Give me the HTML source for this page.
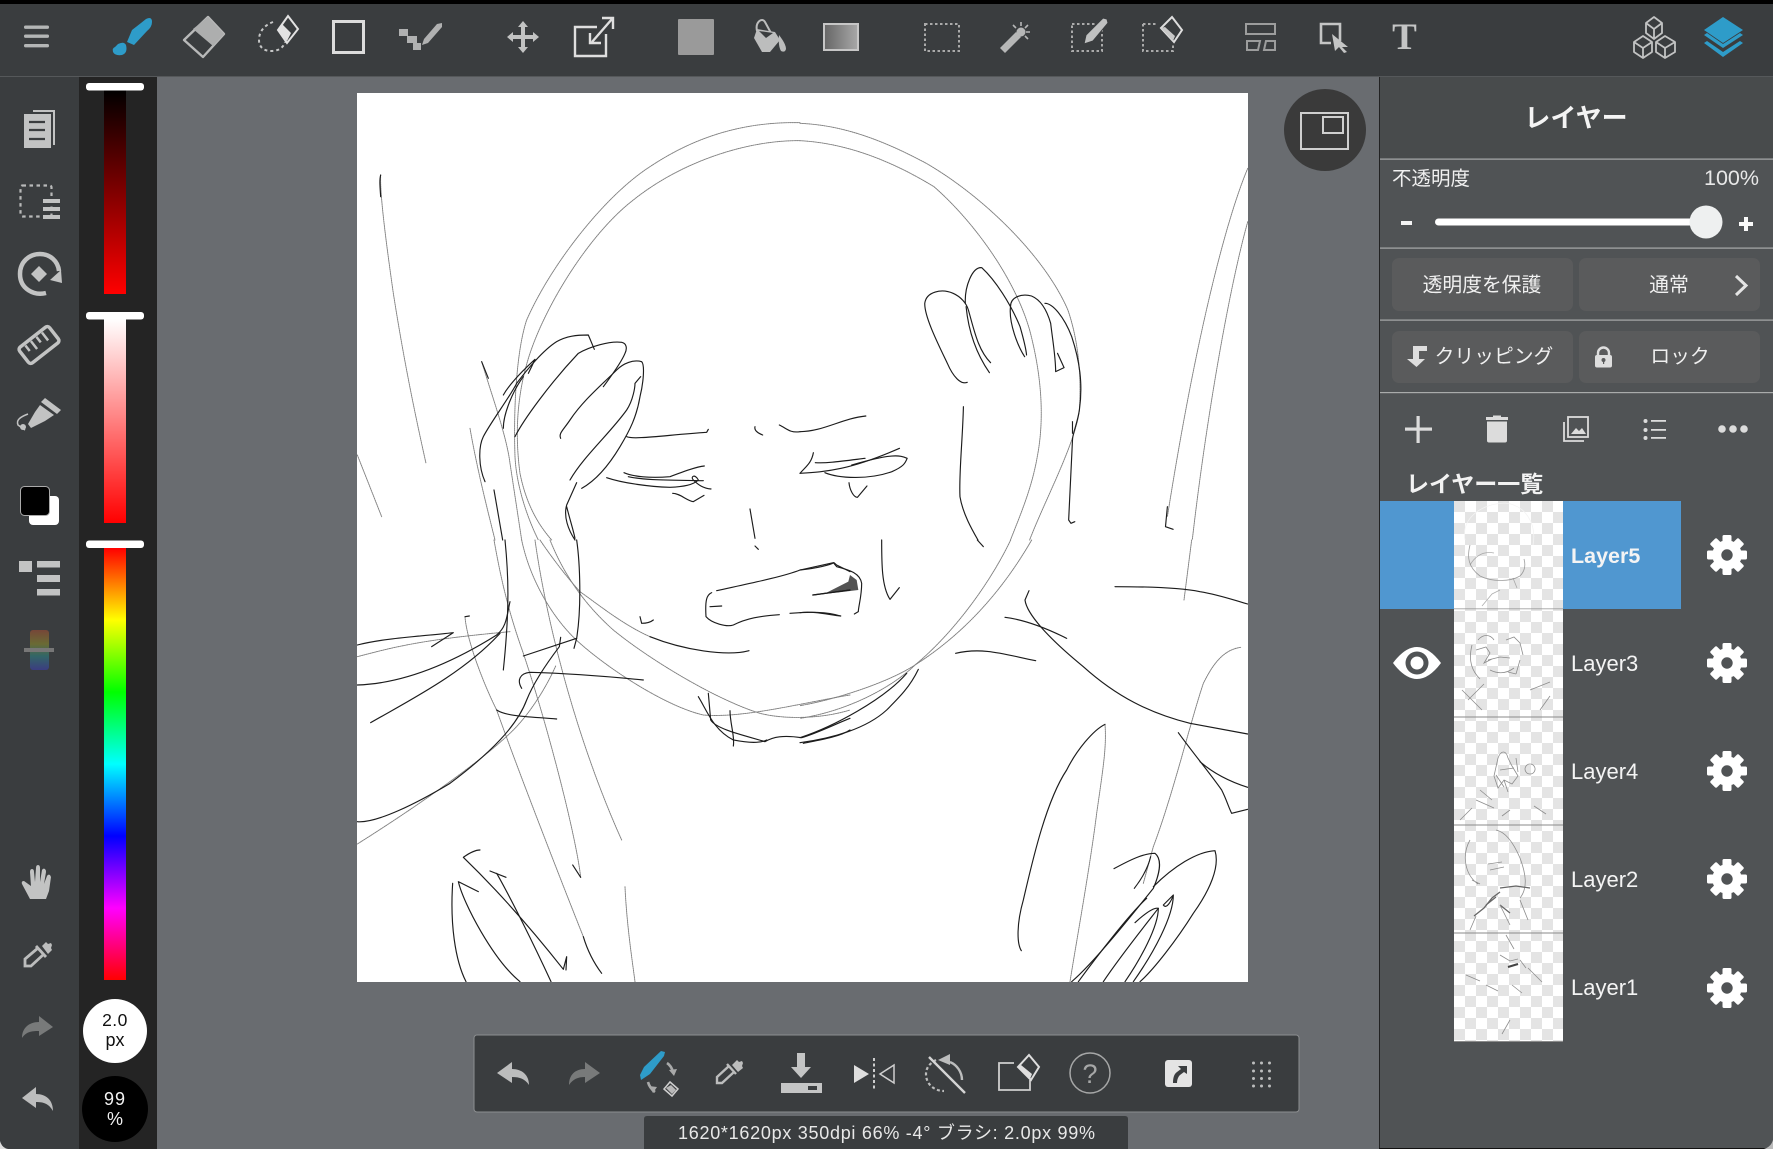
<!DOCTYPE html>
<html lang="ja"><head><meta charset="utf-8"><title>レイヤー</title>
<style>
html,body{margin:0;padding:0;background:#696c70;width:1773px;height:1149px;overflow:hidden}
svg{display:block}
text{font-family:"Liberation Sans","Noto Sans CJK JP",sans-serif}
.k path{fill:none;vector-effect:non-scaling-stroke;stroke-linecap:round;stroke-linejoin:round}
.d path{stroke:#1c1c1c;stroke-width:1.15}
.g path{stroke:#808080;stroke-width:.95;stroke-dasharray:1.3 .9}
.t path{fill:none;stroke:#8d8d8d;stroke-width:.8}
</style></head><body>
<svg xmlns="http://www.w3.org/2000/svg" width="1773" height="1149" viewBox="0 0 1773 1149">
<defs>
<linearGradient id="s1" x1="0" y1="0" x2="0" y2="1"><stop offset="0" stop-color="#000"/><stop offset="1" stop-color="#f00"/></linearGradient>
<linearGradient id="s2" x1="0" y1="0" x2="0" y2="1"><stop offset="0" stop-color="#fff"/><stop offset="1" stop-color="#f00"/></linearGradient>
<linearGradient id="s3" x1="0" y1="0" x2="0" y2="1"><stop offset="0" stop-color="#f00"/><stop offset=".1667" stop-color="#ff0"/><stop offset=".3333" stop-color="#0f0"/><stop offset=".5" stop-color="#0ff"/><stop offset=".6667" stop-color="#00f"/><stop offset=".8333" stop-color="#f0f"/><stop offset="1" stop-color="#f00"/></linearGradient>
<linearGradient id="gr" x1="0" y1="0" x2="1" y2="0"><stop offset="0" stop-color="#666"/><stop offset="1" stop-color="#a8a8a8"/></linearGradient>
<linearGradient id="rb" x1="0" y1="0" x2="0" y2="1"><stop offset="0" stop-color="#8a4a36"/><stop offset=".35" stop-color="#7a7a30"/><stop offset=".65" stop-color="#2f7474"/><stop offset="1" stop-color="#3c3c96"/></linearGradient>
<pattern id="chk" width="22" height="22" patternUnits="userSpaceOnUse" x="1454" y="501"><rect width="22" height="22" fill="#fff"/><rect width="11" height="11" fill="#e4e4e4"/><rect x="11" y="11" width="11" height="11" fill="#e4e4e4"/></pattern>
<g id="gear"><circle r="10.2" fill="none" stroke="#fff" stroke-width="9"/><g fill="#fff"><rect x="-4.5" y="-20" width="9" height="8" rx="1.5"/><rect x="-4.5" y="-20" width="9" height="8" rx="1.5" transform="rotate(45)"/><rect x="-4.5" y="-20" width="9" height="8" rx="1.5" transform="rotate(90)"/><rect x="-4.5" y="-20" width="9" height="8" rx="1.5" transform="rotate(135)"/><rect x="-4.5" y="-20" width="9" height="8" rx="1.5" transform="rotate(180)"/><rect x="-4.5" y="-20" width="9" height="8" rx="1.5" transform="rotate(225)"/><rect x="-4.5" y="-20" width="9" height="8" rx="1.5" transform="rotate(270)"/><rect x="-4.5" y="-20" width="9" height="8" rx="1.5" transform="rotate(315)"/></g></g>
<clipPath id="cv"><rect x="357" y="93" width="891" height="889"/></clipPath>
<clipPath id="th"><rect x="1454" y="501" width="109" height="541"/></clipPath>
</defs>

<rect width="1773" height="1149" fill="#696c70"/>
<!-- top bar -->
<rect width="1773" height="77" fill="#3a3d3f"/>
<rect width="1773" height="4" fill="#000"/>
<rect y="76" width="1773" height="1" fill="#55585a"/>
<!-- left rail -->
<rect y="77" width="79" height="1072" fill="#3a3d3f"/>
<rect x="79" y="77" width="78" height="1072" fill="#242424"/>
<path d="M0 1141v8h8q-6-1-8-8z" fill="#ddd"/>

<!-- top icons -->
<g fill="#b4b6b6"><rect x="24" y="25.5" width="25" height="3.4" rx="1.5"/><rect x="24" y="34.5" width="25" height="3.4" rx="1.5"/><rect x="24" y="44" width="25" height="3.4" rx="1.5"/></g>
<g fill="#2e9cc9"><path d="M146 19q6-3 6 3q0 5-5 9L134 45l-7-3 5-12 9-7z"/><path d="M118 44q6-3 8 1q2 8-4 10q-7 1-9-3q-1-4 2-5z"/></g>
<path d="M208 17l16 17-21 23-19-17z" fill="none" stroke="#b8b9b9" stroke-width="2.4" stroke-linejoin="round"/>
<path d="M208 17l16 17-11 12-20-17z" fill="#adaeae"/>
<g fill="none" stroke="#c6c7c7"><path d="M273 22c-8 3-14 9-14 18 0 8 6 11 12 11 6 0 12-2 14-9" stroke-width="2" stroke-dasharray="3 3"/></g>
<path d="M288 16l10 13-11 14-9-13z" fill="#3a3d3f" stroke="#e2e2e2" stroke-width="2"/><path d="M282 24l9 9-4 8-9-11z" fill="#e2e2e2"/>
<rect x="333.500" y="21.500" width="30" height="31" fill="none" stroke="#dcdcdc" stroke-width="3"/>
<g fill="#b0b1b1"><rect x="399" y="29" width="9" height="7"/><rect x="407" y="36" width="10" height="7"/><rect x="413" y="43" width="8" height="7"/><path d="M437 24l5-1 0 4-14 16-6 2 2-6z"/></g>
<g fill="#c2c3c3"><path d="M523 21l5 6h-3v8h8v-3l6 5-6 5v-3h-8v8h3l-5 6-5-6h3v-8h-8v3l-6-5 6-5v3h8v-8h-3z"/></g>
<g fill="none" stroke="#dfdfdf" stroke-width="2.4"><path d="M606 34v22h-31V27h22"/><path d="M592 42l20-23M602 18h11v11M590 33v10h11"/></g>
<rect x="678" y="19" width="36" height="36" rx="1" fill="#9a9a9a"/>
<path d="M757 31C755 22 762 17 765 22L771 33" fill="none" stroke="#bcbdbd" stroke-width="2"/>
<path d="M757 29L775 32L780 40L770 52H762L754 38Z" fill="#bcbdbd"/>
<path d="M759 31L773 33L766 38Z" fill="#3a3d3f"/>
<path d="M779 35Q786 44 786 49Q785 53 781 51Q778 46 779 35Z" fill="#bcbdbd"/>
<rect x="824" y="24" width="34" height="26" fill="url(#gr)" stroke="#c6c6c6" stroke-width="2"/>

<rect x="925" y="24" width="34" height="27" fill="none" stroke="#aaa" stroke-width="2" stroke-dasharray="2.5 2.5"/>
<g fill="#b6b7b7"><path d="M1016 32l5 5-16 16-5-5z"/><circle cx="1021" cy="32" r="4.5"/></g><g stroke="#b6b7b7" stroke-width="1.6"><path d="M1021 22v4M1030 32h-4M1028 25l-3 3M1028 39l-3-3M1013 25l3 3"/></g>
<rect x="1072" y="24" width="30" height="27" fill="none" stroke="#aaa" stroke-width="2" stroke-dasharray="2.5 2.5"/>
<path d="M1103 18l4 1 1 4-15 18-9 3 2-9z" fill="#c0c1c1" stroke="#3a3d3f" stroke-width="1"/>
<path d="M1143 24h14M1143 24v27h30v-8" fill="none" stroke="#aaa" stroke-width="2" stroke-dasharray="2.5 2.5"/>
<path d="M1172 17l10 13-8 12-13-14z" fill="#3a3d3f" stroke="#dedede" stroke-width="2"/><path d="M1165 27l10 9-2 5-12-13z" fill="#c8c8c8"/>

<g fill="none" stroke="#9c9d9d" stroke-width="2"><rect x="1246" y="24" width="29" height="10"/><path d="M1247 41h13l-2 9h-11zM1266 41h9v9h-11z"/></g>
<path d="M1340 41V24h-19v19h10" fill="none" stroke="#c4c5c5" stroke-width="2.6"/>
<path d="M1332 34l16 13-6 0 5 5-3 1-5-6-4 4z" fill="#c4c5c5"/>
<text x="1404.500" y="49" text-anchor="middle" style="font-family:'Liberation Serif',serif" font-size="37" font-weight="bold" fill="#c4c5c5">T</text>

<g fill="none" stroke="#c2c3c3" stroke-width="1.8" stroke-linejoin="round">
<path d="M1654 17l8 6v10l-8 6-8-6V23zM1646 23l8 6 8-6M1654 29v10"/>
<path d="M1643 36l9 6v10l-9 6-9-6V42zM1634 42l9 6 9-6M1643 48v10"/>
<path d="M1665 36l10 6v10l-10 6-9-6V42zM1656 42l9 6 10-6M1665 48v10"/>
</g>
<g fill="#2e9cc9"><path d="M1723 17l20 13-20 13-19-13z"/><path d="M1704 35l3-2 16 11 17-11 3 2-20 13zM1704 43l3-2 16 11 17-11 3 2-20 14z"/></g>

<!-- left icons -->
<g fill="none" stroke="#c2c3c3"><path d="M33 111h21v34" stroke-width="2"/></g>
<rect x="24" y="114" width="27" height="34" fill="#c2c3c3"/>
<g stroke="#3a3d3f" stroke-width="2.2"><path d="M29 122h16M29 130h16M29 139h16"/></g>
<rect x="20.500" y="185.500" width="31" height="31" rx="2" fill="none" stroke="#b8b9b9" stroke-width="2.2" stroke-dasharray="3.500 3.500"/>
<g fill="#c2c3c3"><rect x="43" y="199" width="17" height="4"/><rect x="43" y="207" width="17" height="4"/><rect x="43" y="215" width="17" height="4"/></g>
<path d="M46 293c-12 3-26-4-26-19 0-12 9-20 20-20 10 0 18 7 19 17" fill="none" stroke="#c2c3c3" stroke-width="4.500"/>
<path d="M50 280l11-10 1 13z" fill="#c2c3c3"/><path d="M39 266l8 8-8 8-8-8z" fill="#c2c3c3"/>
<g transform="translate(39 345) rotate(-38)"><rect x="-19" y="-10" width="38" height="20" rx="3" fill="none" stroke="#c2c3c3" stroke-width="3.500"/><g stroke="#c2c3c3" stroke-width="2.500"><path d="M-11-8v7M-4-8v10M3-8v7M10-8v10"/></g></g>
<path d="M45 398l16 12-4 4-16-12z" fill="#c2c3c3"/><path d="M40 405l14 10-9 6-14 7-3-4 7-12z" fill="#c2c3c3"/>
<path d="M28 414c-8 3-12 6-10 11l7 5" fill="none" stroke="#c2c3c3" stroke-width="1.500"/><circle cx="23" cy="427" r="3" fill="#c2c3c3"/>
<rect x="29" y="496" width="30" height="29" rx="4" fill="#fff"/>
<rect x="20.500" y="486.500" width="29" height="29" rx="4" fill="#000" stroke="#aaa"/>
<g fill="#c2c3c3"><rect x="19" y="561" width="13" height="11"/><rect x="37" y="561" width="23" height="6.500"/><rect x="37" y="575" width="23" height="7"/><rect x="37" y="589" width="23" height="6.500"/></g>
<rect x="30" y="630" width="19" height="40" rx="3" fill="url(#rb)" opacity=".75"/><rect x="24" y="648" width="30" height="4" fill="#777"/>
<path d="M30 899l-8-15q-1-3 2-3l7 5-1-14q0-3 2-3t2 3l1 10 1-14q0-3 2-3t2 3v14l2-12q1-2 3-1 1 1 1 3l-2 12 3-8q1-2 3-1l1 2-2 14-3 8z" fill="#c2c3c3"/>
<g fill="none" stroke="#bcbdbd" stroke-width="2.800"><path d="M44 954L31 966h-6v-7l13-11"/><path d="M36 946l10 11" /></g><path d="M42 946l4-4 2 2 3-1 1 2-1 3 1 2-4 4z" fill="#bcbdbd"/>
<path d="M53 1027L39 1016v6C29 1022 22 1028 22 1038c4-6 9-7 17-7v5z" fill="#787a7a"/>
<path d="M22 1098L36 1087v7c10 0 17 6 17 17-4-7-9-9-17-9v6z" fill="#bcbdbd"/>

<!-- sliders -->
<rect x="104" y="90" width="22" height="204" fill="url(#s1)"/>
<rect x="104" y="319" width="22" height="204" fill="url(#s2)"/>
<rect x="104" y="548" width="22" height="432" fill="url(#s3)"/>
<g fill="#fff"><rect x="86" y="83" width="58" height="7.500" rx="3"/><rect x="86" y="312" width="58" height="7.500" rx="3"/><rect x="86" y="540.500" width="58" height="7.500" rx="3"/></g>
<circle cx="115" cy="1031" r="32" fill="#fff"/>
<text x="115" y="1026" text-anchor="middle" font-size="17.500" fill="#111" letter-spacing=".5">2.0</text>
<text x="115" y="1046" text-anchor="middle" font-size="18" fill="#111">px</text>
<circle cx="115" cy="1109" r="33" fill="#000"/>
<text x="115" y="1105" text-anchor="middle" font-size="18" fill="#f2f2f2" letter-spacing="1">99</text>
<text x="115" y="1125" text-anchor="middle" font-size="18" fill="#f2f2f2">%</text>

<!-- canvas -->
<rect x="357" y="93" width="891" height="889" fill="#fff"/>
<g clip-path="url(#cv)">
<!-- top-left quadrant -->
<g transform="translate(350 90) scale(.33333)">
<g class="k g">
<path d="M92 255C90 300 100 400 130 610C160 800 190 950 228 1120"/>
<path d="M22 1095L95 1280"/>
<path d="M1350 98C1200 95 1050 130 900 230C760 320 600 530 530 690C500 780 490 950 495 1100C500 1200 540 1300 565 1350"/>
<path d="M1350 152C1200 150 1000 210 850 330C720 430 590 640 540 790C510 880 490 1000 510 1150C530 1250 570 1310 605 1350"/>
<path d="M395 815C430 930 470 1040 480 1120L515 1350"/>
<path d="M360 1015C380 1130 410 1250 435 1350"/>
</g>
<g class="k d">
<path d="M92 255C88 270 90 290 92 320"/>
<path d="M405 1175C385 1130 385 1070 400 1040C420 1000 480 920 500 880C530 840 580 780 620 755C650 738 680 735 715 735L733 778"/>
<path d="M460 915C480 880 520 840 555 808C545 830 540 840 535 850"/>
<path d="M460 1015C460 970 490 900 520 860"/>
<path d="M395 815L415 865"/>
<path d="M495 1040C520 990 600 880 685 790C720 770 780 752 815 757C830 760 832 775 825 790C815 815 790 850 760 890"/>
<path d="M632 1045C625 1030 640 1020 660 990C700 930 760 880 800 840C820 820 850 808 875 815C885 825 880 880 870 920C860 980 840 1020 810 1070C780 1120 740 1170 695 1195"/>
<path d="M660 1170C700 1100 780 1030 830 960C850 930 855 890 855 880L872 860"/>
<path d="M830 1040C850 1050 950 1035 1070 1027L1075 1018"/>
<path d="M1215 1010C1212 1022 1225 1030 1238 1035"/>
<path d="M1288 1005C1310 1015 1320 1030 1350 1025"/>
<path d="M822 1148C850 1160 900 1165 960 1160C1000 1145 1040 1130 1063 1128"/>
<path d="M770 1163C820 1180 900 1190 960 1192C1000 1190 1030 1185 1045 1170C1035 1150 1020 1160 1030 1170C1045 1185 1060 1195 1083 1197"/>
<path d="M835 1160C880 1170 930 1170 1060 1172"/>
<path d="M968 1210C990 1210 1010 1232 1030 1235L1062 1216"/>
<path d="M1200 1257L1215 1345"/>
<path d="M680 1178L650 1245C640 1280 655 1320 675 1350"/>
<path d="M650 1250C660 1290 670 1320 675 1345"/>
<path d="M432 1200L458 1350"/>
</g></g>
<!-- top-right quadrant -->
<g transform="translate(800 90) scale(.38270 .33333)">
<g class="k g">
<path d="M0 100C100 105 200 140 330 220C480 320 640 500 700 660C730 760 735 870 730 960C720 1060 640 1230 600 1350"/>
<path d="M0 152C130 160 250 220 350 290C450 390 560 560 600 720C630 850 640 980 620 1100C605 1200 570 1290 550 1350"/>
<path d="M1170 235C1120 370 1040 700 960 1280"/>
<path d="M1170 395C1120 600 1060 1000 1025 1350"/>
</g>
<g class="k d">
<path d="M960 1250L955 1310L975 1318"/>
<path d="M437 877C420 885 400 860 385 820C360 760 325 680 326 640C330 605 370 595 400 610C420 620 435 640 440 660C455 720 465 780 498 818"/>
<path d="M432 640C430 590 450 530 475 533C510 570 550 640 575 710C580 730 590 770 592 795"/>
<path d="M550 650C550 620 580 610 605 618C630 630 645 660 655 700C660 750 668 800 668 845L690 833L673 790"/>
<path d="M640 640C660 640 690 680 710 740C730 810 740 880 730 960C725 1000 712 1030 712 1050L702 1290L708 1300L718 1295"/>
<path d="M712 995L712 1030"/>
<path d="M434 650C440 720 460 790 495 848"/>
<path d="M550 650C545 700 570 770 587 800"/>
<path d="M427 950C425 1050 415 1150 418 1220C425 1270 450 1320 465 1350"/>
<path d="M172 978C110 985 60 1025 0 1025"/>
<path d="M35 1088C30 1120 15 1130 0 1150"/>
<path d="M40 1118C70 1120 100 1115 170 1105"/>
<path d="M0 1150C70 1145 130 1140 260 1075"/>
<path d="M65 1148C100 1165 180 1170 240 1145C270 1130 275 1120 280 1105C260 1095 240 1090 135 1125"/>
<path d="M128 1178C130 1200 140 1222 150 1222L175 1188"/>
</g></g>
<!-- bottom-left quadrant -->
<g transform="translate(350 540) scale(.33333)">
<g class="k g">
<path d="M22 350C120 325 200 300 480 275"/>
<path d="M515 0C540 120 610 240 690 310C780 390 950 500 1060 525C1180 535 1350 490 1500 465"/>
<path d="M600 0C640 100 700 190 790 270C900 360 1100 480 1230 520C1310 540 1420 535 1500 510"/>
<path d="M345 230C350 300 400 430 440 510C500 680 640 1040 700 1190"/>
<path d="M432 0C450 100 470 200 520 340C600 580 680 900 692 1012"/>
<path d="M555 0C590 250 680 600 815 900"/>
<path d="M825 1040C830 1150 845 1250 855 1325"/>
<path d="M617 378C590 440 540 520 490 570C400 660 200 800 22 912"/>
<path d="M570 0C590 30 640 100 690 155C740 190 820 255 900 290"/>
</g>
<g class="k d">
<path d="M22 315C100 295 200 290 310 278L245 320"/>
<path d="M22 435C170 430 320 360 440 285C470 260 470 230 480 185"/>
<path d="M62 548C180 480 340 400 450 280"/>
<path d="M465 0C475 100 480 200 460 390"/>
<path d="M358 228L345 230"/>
<path d="M680 0C690 70 695 200 680 295L672 325"/>
<path d="M520 348L680 295"/>
<path d="M632 292L628 320C590 370 550 430 530 480C500 560 420 640 300 730C200 790 80 850 22 845"/>
<path d="M515 445C500 420 510 400 540 397C650 400 780 410 880 420"/>
<path d="M440 510C470 530 540 530 620 537"/>
<path d="M692 1012L668 975"/>
<path d="M700 1190C715 1240 740 1280 755 1300"/>
<path d="M390 930C370 930 350 945 340 952C400 1010 500 1110 640 1288L650 1250L648 1290"/>
<path d="M420 993L468 1012"/>
<path d="M440 1000C480 1070 550 1210 603 1325"/>
<path d="M308 1030C300 1150 315 1260 348 1325"/>
<path d="M385 1055L325 1025C340 1090 430 1260 510 1325"/>
<path d="M1045 470C1070 510 1090 570 1150 600"/>
<path d="M1075 460L1082 540C1100 570 1200 590 1245 605C1270 590 1300 585 1355 593C1400 580 1450 555 1500 535"/>
<path d="M1140 512C1140 550 1155 590 1150 618"/>
<path d="M1150 600C1200 610 1230 610 1250 600"/>
<path d="M1360 610C1410 600 1470 590 1500 570"/>
<path d="M870 230L875 250C890 250 900 248 910 240"/>
<path d="M1100 152C1200 130 1300 110 1350 90C1400 85 1440 75 1452 68L1460 75L1500 95"/>
<path d="M1085 158C1070 165 1065 180 1068 230C1085 250 1130 262 1150 255C1190 235 1230 228 1288 224"/>
<path d="M1320 220C1380 215 1430 215 1472 228"/>
<path d="M1080 200L1115 198"/>
<path d="M1215 18L1225 28"/>
<path d="M1197 332C1130 350 1000 330 900 290"/>
<path d="M1390 165L1500 150"/>
</g></g>
<!-- bottom-right quadrant -->
<g transform="translate(800 540) scale(.33333)">
<path d="M80 158L145 125L150 105L170 120L175 150L110 158Z" fill="#1a1a1a" opacity=".75"/>
<g class="k g">
<path d="M632 0C570 130 460 280 345 375C260 430 100 480 0 497"/>
<path d="M695 0C620 130 510 270 345 375C290 430 160 510 0 535"/>
<path d="M1175 0L1152 180"/>
<path d="M1322 322C1270 330 1240 370 1210 430C1170 550 1120 760 1060 920L1030 1030"/>
<path d="M915 553C920 620 910 680 890 820C870 980 830 1200 810 1325"/>
</g>
<g class="k d">
<path d="M0 593C100 560 250 480 320 400"/>
<path d="M0 608C100 595 200 565 260 510C300 470 330 440 355 388"/>
<path d="M0 90L100 68L110 80C150 90 180 100 185 130C185 170 175 200 175 215L163 222"/>
<path d="M38 165L150 150"/>
<path d="M0 218C40 212 90 225 122 228"/>
<path d="M245 0C245 70 245 140 270 178L298 143"/>
<path d="M532 0L550 20"/>
<path d="M945 140C1050 140 1150 145 1200 155C1260 165 1300 180 1343 192"/>
<path d="M687 152L675 180C680 220 740 290 850 380C950 470 1050 520 1170 550L1343 582"/>
<path d="M615 232C680 240 750 270 800 295"/>
<path d="M467 340C550 320 620 345 707 362"/>
<path d="M1135 578C1180 640 1230 700 1265 750C1280 780 1285 800 1295 820L1343 808"/>
<path d="M1200 665C1240 700 1290 725 1343 742"/>
<path d="M664 1232C650 1210 650 1150 670 1080C700 950 740 780 800 690C830 630 880 570 915 553"/>
<path d="M942 986C990 960 1030 940 1065 940C1090 960 1075 1010 1060 1045C1000 1120 880 1270 815 1325"/>
<path d="M1003 1045C1030 1010 1045 980 1052 950"/>
<path d="M1060 1040C1120 980 1190 935 1245 932C1260 980 1230 1050 1180 1120C1130 1200 1060 1290 1020 1325"/>
<path d="M1005 1148C1030 1125 1060 1100 1075 1105C1075 1160 1020 1260 975 1325"/>
<path d="M1120 1065L1090 1095C1100 1110 1115 1080 1120 1065C1120 1130 1060 1240 1000 1325"/>
<path d="M1075 1105C1040 1150 960 1250 910 1325"/>
<path d="M1040 1075C990 1120 890 1250 835 1325"/>
</g></g>
</g>

<!-- minimap button -->
<circle cx="1325" cy="130" r="41" fill="#3a3a3a"/>
<rect x="1301" y="113" width="47" height="36" fill="none" stroke="#cfcfcf" stroke-width="2"/>
<rect x="1323" y="117" width="20" height="16" fill="none" stroke="#cfcfcf" stroke-width="2"/>

<!-- right panel -->
<rect x="1379" y="77" width="394" height="1072" fill="#505355" />
<rect x="1379" y="77" width="394" height="82" fill="#484b4c"/>
<rect x="1379" y="77" width="1" height="1072" fill="#222"/>
<rect x="1379" y="1148" width="394" height="1" fill="#111"/>
<path d="M1773 1140v9h-9q7-2 9-9z" fill="#bbb"/>
<text x="1576" y="127" text-anchor="middle" font-size="26" font-weight="700" fill="#f4f4f4">レイヤー</text>
<g fill="#a9abab"><rect x="1380" y="158.500" width="393" height="1.200"/><rect x="1380" y="247.500" width="393" height="1.200"/><rect x="1380" y="319.500" width="393" height="1.200"/><rect x="1380" y="392" width="393" height="1.200"/></g>
<text x="1392" y="185" font-size="19.500" fill="#f0f0f0">不透明度</text>
<text x="1759" y="185" text-anchor="end" font-size="21.500" fill="#e8e8e8">100%</text>
<rect x="1401" y="221" width="11" height="4" fill="#f4f4f4"/>
<rect x="1435" y="218.500" width="265" height="7" rx="3.500" fill="#fff"/>
<circle cx="1706" cy="222" r="16.500" fill="#eef0f0"/>
<path d="M1744 217h4v5h5v4h-5v5h-4v-5h-5v-4h5z" fill="#fafafa"/>
<g fill="#5a5b5c"><rect x="1392" y="258" width="181" height="53" rx="7"/><rect x="1579" y="258" width="181" height="53" rx="7"/><rect x="1392" y="331" width="181" height="52" rx="7"/><rect x="1579" y="331" width="181" height="52" rx="7"/></g>
<text x="1482" y="291.500" text-anchor="middle" font-size="19.800" fill="#f0f0f0">透明度を保護</text>
<text x="1669" y="291.500" text-anchor="middle" font-size="19.800" fill="#f0f0f0">通常</text>
<path d="M1736 276l10 9.500-10 9.500" fill="none" stroke="#e4e4e4" stroke-width="3"/>
<path d="M1413 346h14v5h-8v8h6l-8.500 8-9.500-8h6z" fill="#dedede"/>
<text x="1494" y="363" text-anchor="middle" font-size="19.800" fill="#f0f0f0">クリッピング</text>
<path d="M1598 356v-3a5.500 5.500 0 0 1 11 0v3" fill="none" stroke="#dedede" stroke-width="2.400"/>
<rect x="1595" y="355" width="17" height="12.500" rx="2" fill="#dedede"/><circle cx="1603.500" cy="360" r="2" fill="#5a5b5c"/><rect x="1603" y="360" width="1.200" height="4" fill="#5a5b5c"/>
<text x="1680" y="363" text-anchor="middle" font-size="19.800" fill="#f0f0f0">ロック</text>
<g fill="#dcdcdc"><rect x="1405" y="427.500" width="27" height="3.200"/><rect x="1416.500" y="416" width="3.200" height="27"/></g>
<path d="M1486 417h22v3h-22zM1493 415.500h8v2h-8z" fill="#dcdcdc"/><path d="M1487 421.500h20v19q0 2-2 2h-16q-2 0-2-2z" fill="#dcdcdc"/>
<g fill="none" stroke="#dcdcdc" stroke-width="1.800"><rect x="1568" y="417" width="20" height="20"/><path d="M1564 422v19h20"/></g><path d="M1571 434l5-6 3 3 3-3 4 6z" fill="#dcdcdc"/>
<g fill="#dcdcdc"><circle cx="1645.500" cy="421" r="2"/><circle cx="1645.500" cy="430" r="2"/><circle cx="1645.500" cy="438" r="2"/><rect x="1651" y="420" width="15" height="1.800"/><rect x="1651" y="429" width="15" height="1.800"/><rect x="1651" y="437" width="15" height="1.800"/><circle cx="1722" cy="429" r="3.800"/><circle cx="1733" cy="429" r="3.800"/><circle cx="1744" cy="429" r="3.800"/></g>
<text x="1406" y="492" font-size="23" font-weight="700" fill="#f2f2f2">レイヤー一覧</text>

<!-- layers -->
<rect x="1380" y="501" width="301" height="108" fill="#5097d0"/>
<rect x="1454" y="501" width="109" height="541" fill="url(#chk)"/>
<g fill="#8a8a8a"><rect x="1454" y="716.500" width="109" height="1"/><rect x="1454" y="824.500" width="109" height="1"/><rect x="1454" y="932.500" width="109" height="1"/><rect x="1454" y="1041" width="109" height="1"/><rect x="1454" y="608.500" width="109" height=".7"/></g>
<g class="t" clip-path="url(#th)">
<path d="M1470 545c-3 12-2 22 10 31 12 6 30 6 40 0 4-4 6-10 4-17" opacity=".85"/>
<path d="M1470 565c6-10 14-14 24-12M1513 578l4 10M1482 606l10-12 8-4" opacity=".7"/>
<path d="M1465 540c-4-20 14-36 40-37 20 2 32 20 28 42" style="stroke:#f4f4f4"/>
<path d="M1478 640c5-6 12-6 16 0M1476 650l10-3 4 6-6 10 8-4M1506 640l8-3 6 6 3 12M1488 660l12-3 10 1M1490 670c8 4 16 4 24-2M1468 700l16-16M1530 690l20-8M1540 710l10-14M1472 645c-4 16 0 26 8 34M1508 672l8 2M1462 690l20 20M1520 660l-4 14" />
<path d="M1498 758c3-8 8-8 10 0l4 8 6 10-6 8-8-4-6 8-4-12zM1500 770l14-2M1516 758l2 14M1530 764a5 5 0 1 0 .1 0M1496 775l8 12M1504 780l4 12" />
<path d="M1460 820l12-12M1476 800l18 8M1510 810l-8 6M1534 806l12 8M1480 790l12 10" />
<path d="M1470 840c-8 14-6 34 8 44M1490 870l14-3M1472 880l8 4M1520 858c6 16 8 30 0 40M1496 830c10 2 18 14 24 28M1488 864l14-2" />
<path d="M1500 892l-8 6-8 10-10 8M1500 888l16-2 14 2M1486 905l10-8M1500 905l10 8" style="stroke:#666;stroke-width:1.300"/>
<path d="M1470 930l6-14M1500 905l10 20M1520 900l8 20" />
<path d="M1506 935l8 14M1500 955l10 6 8-2M1520 960l6 8M1528 968l14 14M1486 985l12 6M1512 985l10 8M1510 1020l-8 14M1466 975l14 6" />
<path d="M1508 967l10-3" style="stroke:#444;stroke-width:2.200"/>
</g>
<g font-size="22" fill="#f4f4f4">
<text x="1571" y="563" font-weight="700" font-size="21.500">Layer5</text>
<text x="1571" y="671">Layer3</text>
<text x="1571" y="779">Layer4</text>
<text x="1571" y="887">Layer2</text>
<text x="1571" y="995">Layer1</text>
</g>
<use href="#gear" x="1727" y="555"/><use href="#gear" x="1727" y="663"/><use href="#gear" x="1727" y="771"/><use href="#gear" x="1727" y="879"/><use href="#gear" x="1727" y="988"/>
<path d="M1393 663q24-32 48 0q-24 32-48 0z" fill="#fff"/><circle cx="1417" cy="663" r="11.500" fill="#505355"/><circle cx="1417" cy="663" r="6.500" fill="#fff"/>

<!-- bottom toolbar -->
<rect x="474" y="1035" width="825" height="77" rx="3" fill="#3a3d3f" stroke="#8c8e90"/>
<path d="M497 1073L512 1062v7c10 0 17 6 17 16-4-6-9-8-17-8v6z" fill="#bcbdbd"/>
<path d="M600 1073L585 1062v7c-10 0-16 6-16 16 4-6 9-8 16-8v6z" fill="#787a7a"/>
<path d="M661 1051l4 1-1 4-14 18-9 6-1-5 4-8z" fill="#2e9cc9"/>
<g fill="none" stroke="#a8a9a9" stroke-width="2.600"><path d="M667 1063c3 2 5 5 6 9"/><path d="M648 1082c1 4 3 7 7 10"/></g>
<path d="M669 1070l8-1-3 7zM649 1086l8 1-4 6z" fill="#a8a9a9"/>
<path d="M670 1082l8 7-6 7-8-7z" fill="#3a3d3f" stroke="#cfcfcf" stroke-width="1.500"/><path d="M666 1088l5-3 5 5-4 4z" fill="#b8b8b8"/>
<g fill="none" stroke="#bcbdbd" stroke-width="2.400"><path d="M734 1072l-12 11h-5v-6l12-11"/><path d="M727 1064l9 10"/></g><path d="M732 1065l5-5 2 2 3-1 1 2-1 3 1 2-5 4z" fill="#bcbdbd"/>
<path d="M797 1053h8v14h6l-10 11-10-11h6z" fill="#c4c5c5"/>
<rect x="781" y="1083" width="41" height="10" fill="#c4c5c5"/><rect x="808" y="1086" width="9" height="4" fill="#3a3d3f"/>
<path d="M854 1065l15 9-15 9z" fill="#dedede"/><path d="M894 1065l-14 9 14 9z" fill="none" stroke="#cfcfcf" stroke-width="1.500"/>
<path d="M874 1058v32" stroke="#dedede" stroke-width="1.800" stroke-dasharray="3 2.500"/>
<path d="M936 1060c-6 3-10 8-10 14 0 10 8 17 18 17" fill="none" stroke="#bcbdbd" stroke-width="2.200" stroke-dasharray="3 2.500"/>
<path d="M950 1062c7 3 12 10 12 18" fill="none" stroke="#bcbdbd" stroke-width="2.400"/>
<path d="M938 1060l12-6v11z" fill="#bcbdbd"/>
<path d="M929 1057l36 36" stroke="#d4d4d4" stroke-width="2.400"/>
<path d="M1014 1063h-15v27h31v-10" fill="none" stroke="#cfcfcf" stroke-width="1.800"/>
<path d="M1029 1055l10 12-8 13-13-13z" fill="#3a3d3f" stroke="#dedede" stroke-width="2"/><path d="M1021 1065l11 9-2 5-12-12z" fill="#dedede"/>
<circle cx="1090" cy="1073" r="20" fill="none" stroke="#a6a7a7" stroke-width="1.500"/>
<text x="1090" y="1083" text-anchor="middle" font-size="27" fill="#a6a7a7">?</text>
<rect x="1165" y="1060" width="27" height="27" rx="3" fill="#e4e4e4"/>
<path d="M1187 1066v8l-3-2-4 3c-2 2-3 5-3 8h-4c0-5 1-9 4-11l4-3-3-3z" fill="#3a3d3f"/>
<g fill="#bcbdbd"><circle cx="1253.500" cy="1063" r="1.500"/><circle cx="1261.500" cy="1063" r="1.500"/><circle cx="1269.500" cy="1063" r="1.500"/><circle cx="1253.500" cy="1071" r="1.500"/><circle cx="1261.500" cy="1071" r="1.500"/><circle cx="1269.500" cy="1071" r="1.500"/><circle cx="1253.500" cy="1078.500" r="1.500"/><circle cx="1261.500" cy="1078.500" r="1.500"/><circle cx="1269.500" cy="1078.500" r="1.500"/><circle cx="1253.500" cy="1086" r="1.500"/><circle cx="1261.500" cy="1086" r="1.500"/><circle cx="1269.500" cy="1086" r="1.500"/></g>
<path d="M644 1149v-30q0-3 3-3h478q3 0 3 3v30z" fill="#3a3d3f"/>
<text x="678" y="1139" font-size="18" fill="#e8e8e8" textLength="417" lengthAdjust="spacing">1620*1620px 350dpi 66% -4° ブラシ: 2.0px 99%</text>
</svg>
</body></html>
